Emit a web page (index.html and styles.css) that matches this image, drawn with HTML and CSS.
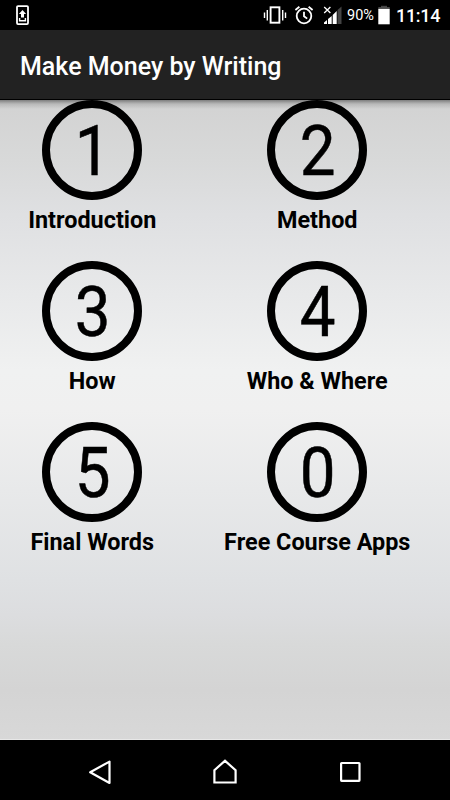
FILE: index.html
```html
<!DOCTYPE html>
<html lang="en">
<head>
    <meta charset="UTF-8">
    <meta name="viewport" content="width=device-width, initial-scale=1.0">
    <title>Make Money by Writing</title>
    <link rel="stylesheet" href="styles.css">
</head>
<body>
    <div class="status-bar">
        <svg class="update-icon" width="14" height="21" viewBox="0 0 14 21">
            <rect x="1" y="1.1" width="11" height="18" rx="1" fill="none" stroke="#fff" stroke-width="1.8"/>
            <path d="M6.5 5 L10.1 9 H8 V12.6 H5 V9 H2.9 Z" fill="#fff"/>
            <path d="M3.6 13 V15.7 H9.4 V13" fill="none" stroke="#fff" stroke-width="1.4"/>
        </svg>
        <div class="status-right">
            <svg class="vibrate-icon" width="24" height="20" viewBox="0 0 24 20" fill="none" stroke="#fff">
                <rect x="7.6" y="2.3" width="8.8" height="15.4" stroke-width="1.9"/>
                <path d="M1.5 7.5 V13 M4.3 5 V15.5 M19.7 5 V15.5 M22.5 7.5 V13" stroke-width="1.4"/>
            </svg>
            <svg class="alarm-icon" width="20" height="20" viewBox="0 0 20 20" fill="none" stroke="#fff" stroke-width="1.8">
                <circle cx="10" cy="11" r="7.3"/>
                <path d="M10 6.8 V11.2 L13.2 13.6 M1.4 5 L5.4 1.8 M14.6 1.8 L18.6 5"/>
            </svg>
            <svg class="signal-icon" width="19" height="20" viewBox="0 0 19 20">
                <path d="M14.5 5 L18.5 1.5 V19 H14.5 Z" fill="#444"/>
                <path d="M1 19 V17.6 L4 15 V19 Z M5 19 V14 L8.7 11 V19 Z M9.7 19 V10 L13.7 6 V19 Z" fill="#fff"/>
                <path d="M1.2 2 L7.4 8 M7.4 2 L1.2 8" stroke="#fff" stroke-width="1.3"/>
            </svg>
            <span class="percent">90%</span>
            <svg class="battery-icon" width="12" height="20" viewBox="0 0 12 20">
                <rect x="3" y="0.8" width="6" height="2" fill="#444"/>
                <rect x="0.3" y="2.2" width="11.4" height="2" fill="#555"/>
                <rect x="0.3" y="4" width="11.4" height="15.3" fill="#fff"/>
            </svg>
            <span class="clock">11:14</span>
        </div>
    </div>

    <header class="app-header">
        <h1>Make Money by Writing</h1>
    </header>

    <main class="menu">
        <a class="menu-item"><span class="circle"><span class="digit">1</span></span><span class="label">Introduction</span></a>
        <a class="menu-item"><span class="circle"><span class="digit">2</span></span><span class="label">Method</span></a>
        <a class="menu-item"><span class="circle"><span class="digit">3</span></span><span class="label">How</span></a>
        <a class="menu-item"><span class="circle"><span class="digit">4</span></span><span class="label">Who &amp; Where</span></a>
        <a class="menu-item"><span class="circle"><span class="digit">5</span></span><span class="label">Final Words</span></a>
        <a class="menu-item"><span class="circle"><span class="digit">0</span></span><span class="label">Free Course Apps</span></a>
    </main>

    <nav class="nav-bar">
        <svg width="28" height="28" viewBox="0 0 28 28" fill="none" stroke="#fff" stroke-width="2.2" stroke-linejoin="round">
            <path d="M23.5 3.6 V25 L4.2 14.3 Z"/>
        </svg>
        <svg width="28" height="28" viewBox="0 0 28 28" fill="none" stroke="#fff" stroke-width="2.2">
            <path d="M3.4 24.5 V12.2 L14 2.8 L24.6 12.2 V24.5 Z"/>
        </svg>
        <svg width="28" height="28" viewBox="0 0 28 28" fill="none" stroke="#fff" stroke-width="2.2">
            <rect x="5.1" y="5" width="18.4" height="17.8" rx="0.5"/>
        </svg>
    </nav>
</body>
</html>
```
FILE: styles.css
```css
/* General Reset */
* { margin: 0; padding: 0; box-sizing: border-box; }
body { font-family: Roboto, "Liberation Sans", sans-serif; width: 450px; height: 800px; display: flex; flex-direction: column; overflow: hidden; background-color: #000; color: #000; }
svg { display: block; flex: none; }

.status-bar { height: 30px; flex: none; display: flex; justify-content: space-between; align-items: center; padding: 0 9px 0 16px; color: #fff; }
.status-right { display: flex; align-items: center; }
.alarm-icon { margin-left: 7px; }
.signal-icon { margin-left: 9px; }
.percent { margin-left: 5px; width: 29px; font-size: 14.5px; line-height: 30px; padding-top: 2px; }
.battery-icon { margin-left: 2px; }
.clock { margin-left: 6px; width: 45px; font-size: 18px; font-weight: 500; letter-spacing: -0.3px; line-height: 30px; padding-top: 1px; }

.app-header { height: 70px; flex: none; display: flex; align-items: center; padding: 4px 20px 0; background-color: #222; border-bottom: 1px solid #000; color: #fff; }
.app-header h1 { font-size: 25px; font-weight: 500; white-space: nowrap; }

.menu { height: 640px; flex: none; display: grid; grid-template-columns: 184.5px 184.5px; grid-auto-rows: 161.2px; column-gap: 40.5px; align-content: start; border-bottom: 1px solid #e8e8e8; background: linear-gradient(rgba(0, 0, 0, 0.4) 0, rgba(0, 0, 0, 0.12) 4px, rgba(0, 0, 0, 0) 9px), linear-gradient(#d2d2d2 0, #d8d9d9 60px, #dfe0e2 115px, #e8e9ea 195px, #f0f1f1 270px, #f0f0f0 310px, #e8e9ea 390px, #dfe1e3 480px, #dcdddf 515px, #d8d9d9 545px, #d4d4d4 590px, #d8d8d8 640px); }
.menu-item { display: flex; flex-direction: column; align-items: center; }
.circle { width: 100px; height: 100px; flex: none; border: 8px solid #000; border-radius: 50%; display: flex; justify-content: center; align-items: center; }
.digit { font-size: 70px; line-height: 84px; padding-top: 1px; -webkit-text-stroke: 0.5px #000; transform: scaleX(0.91); }
.label { margin-top: 5px; font-size: 23.4px; font-weight: 700; line-height: 30px; white-space: nowrap; }

.nav-bar { height: 60px; flex: none; display: flex; justify-content: space-between; align-items: center; padding: 4px 86px 0; }
```
